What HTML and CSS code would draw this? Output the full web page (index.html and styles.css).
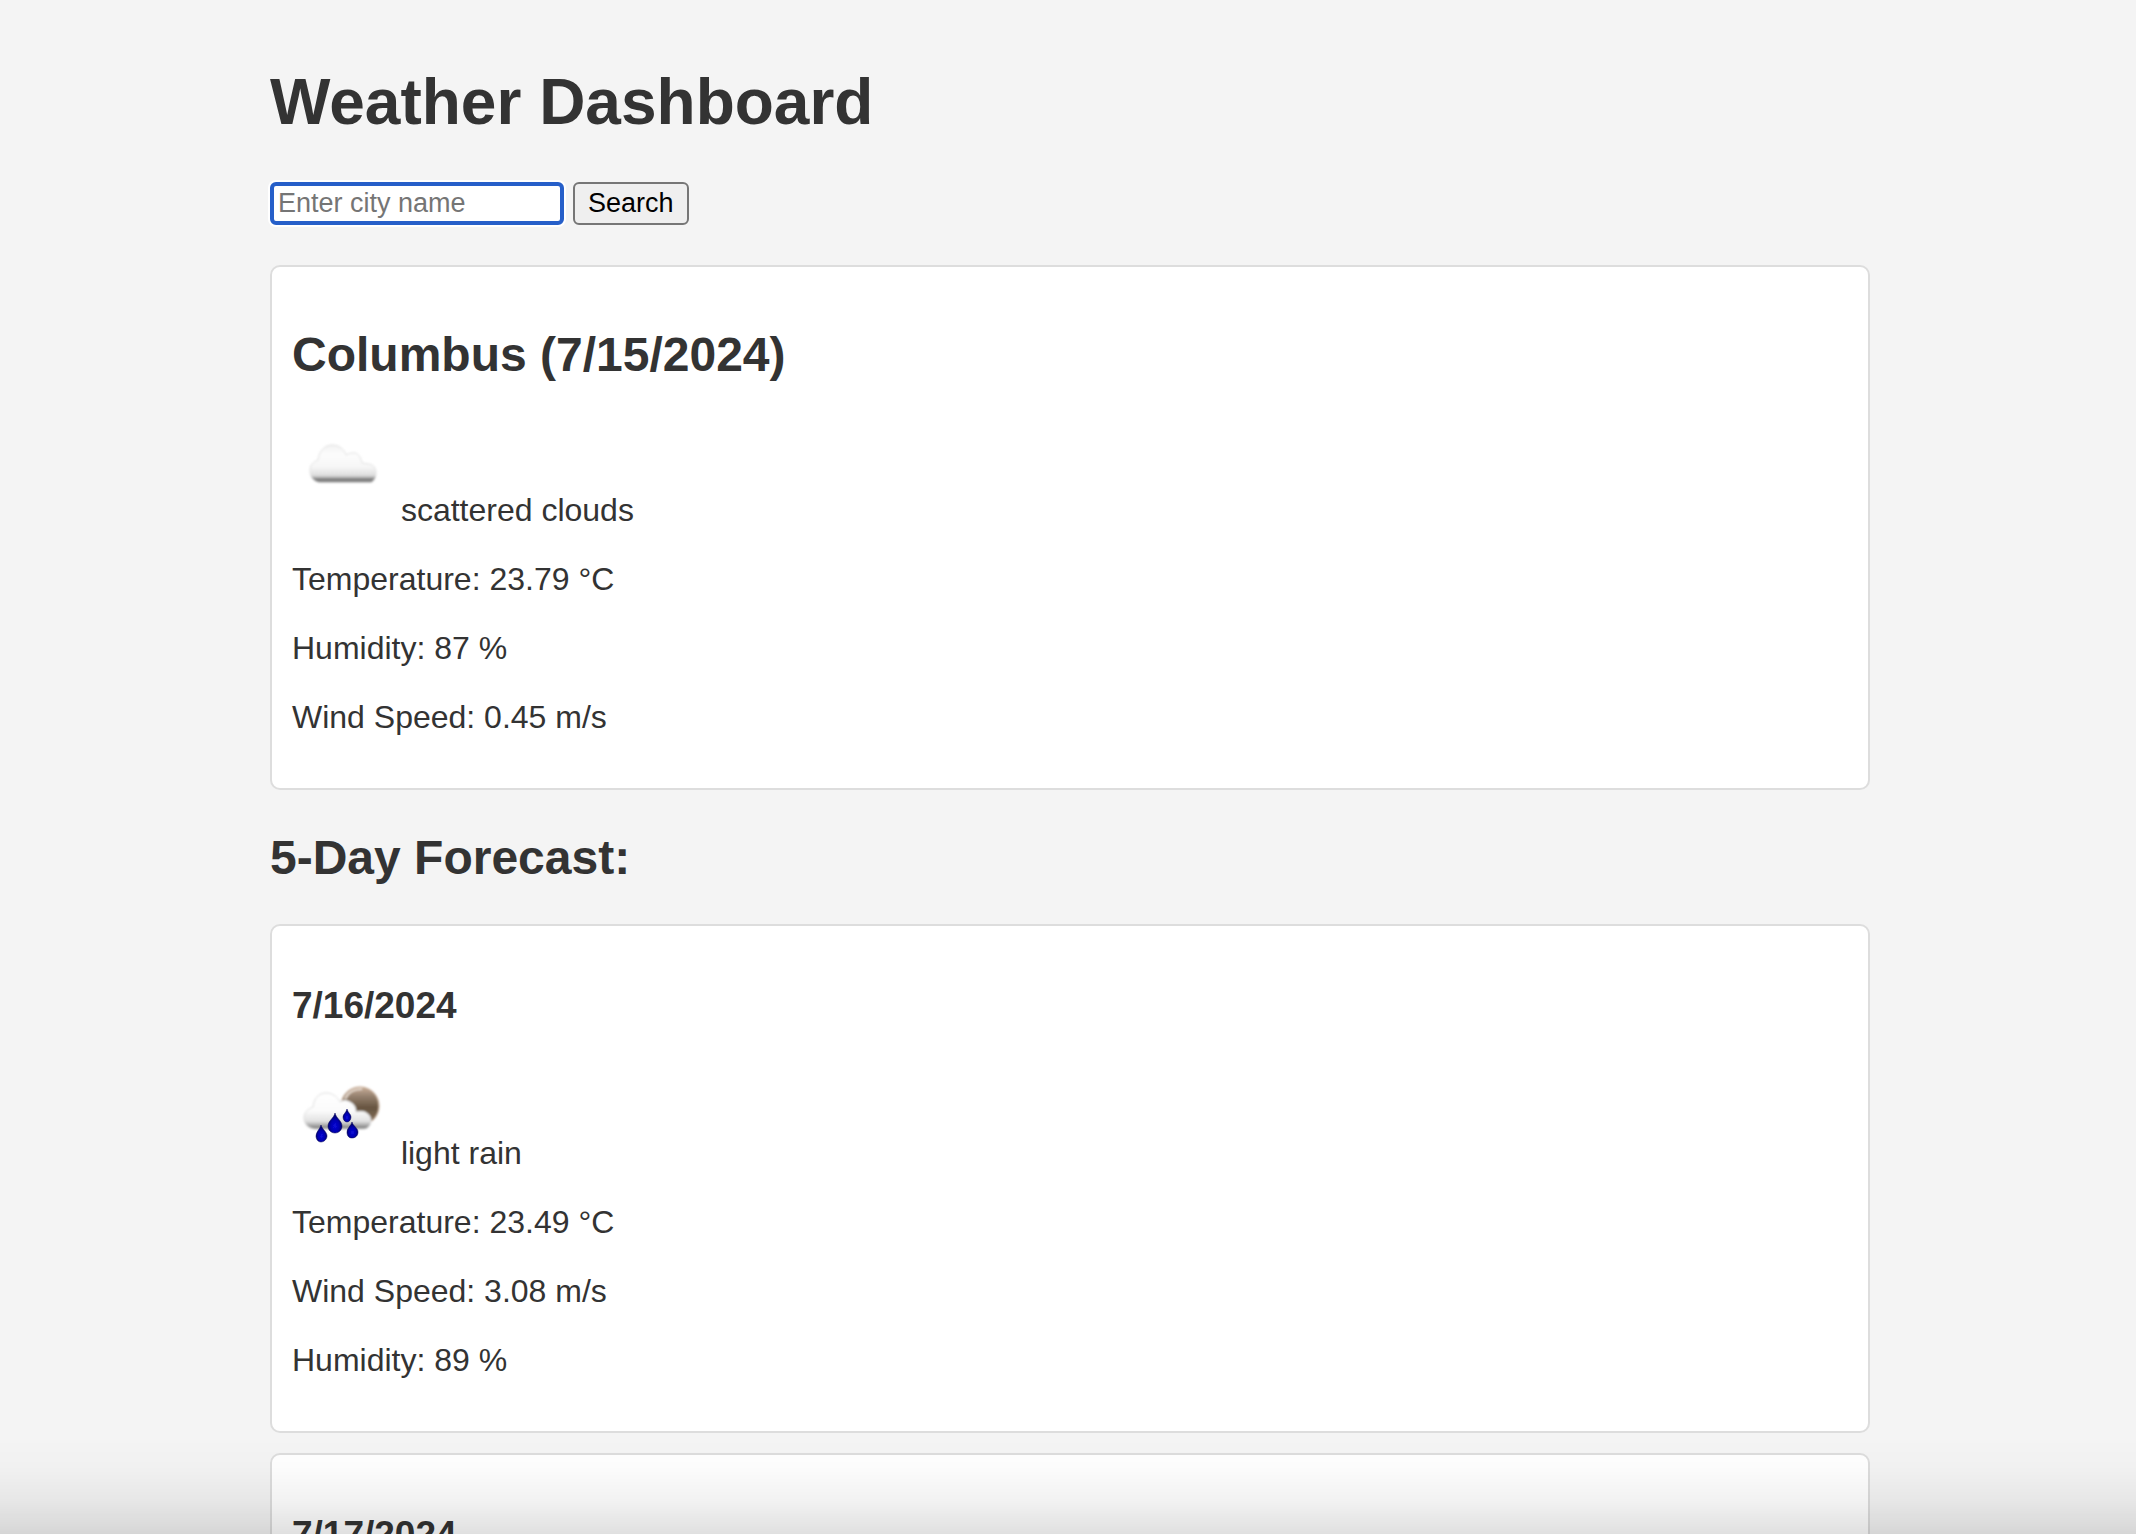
FILE: index.html
```html
<!DOCTYPE html>
<html lang="en">
<head>
<meta charset="utf-8">
<meta name="viewport" content="width=device-width, initial-scale=1">
<title>Weather Dashboard</title>
<link rel="stylesheet" href="styles.css">
</head>
<body>
<div class="page">
  <main class="container">
    <h1 class="title">Weather Dashboard</h1>
    <form class="search">
      <input class="search-input" type="text" aria-label="City name" placeholder="Enter city name">
      <button class="search-button" type="button">Search</button>
    </form>

    <section class="card">
      <h2 class="heading">Columbus (7/15/2024)</h2>
      <p class="condition">
        <svg class="icon" viewBox="0 0 100 100" aria-hidden="true">
          <defs>
            <linearGradient id="cloud" x1="0" y1="0" x2="0" y2="1">
              <stop offset="0" stop-color="#f2f2f2"/>
              <stop offset=".25" stop-color="#fcfcfc"/>
              <stop offset=".6" stop-color="#f6f6f6"/>
              <stop offset=".82" stop-color="#dedede"/>
              <stop offset=".87" stop-color="#b8b8b8"/>
              <stop offset=".92" stop-color="#808080"/>
              <stop offset="1" stop-color="#747474"/>
            </linearGradient>
            <linearGradient id="cloud-edge" x1="0" y1="0" x2="0" y2="1">
              <stop offset="0" stop-color="#e0e0e0"/>
              <stop offset=".8" stop-color="#e0e0e0"/>
              <stop offset="1" stop-color="#a0a0a0"/>
            </linearGradient>
            <filter id="soft"><feGaussianBlur stdDeviation=".8"/></filter>
          </defs>
          <path d="M27 61C21 60 18 55 18 50C18 44 21 41 26 39C27 30 33 24 40 24C47 24 52 28 54 34C57 32 60 32 63 32C67 33 69 37 70 42C72 42 74 43 77 43C82 44 84 47 84 52C84 56 82 60 79 61Z" fill="url(#cloud)" stroke="url(#cloud-edge)" stroke-width="1" filter="url(#soft)"/>
        </svg>
        <span>scattered clouds</span>
      </p>
      <p class="reading">Temperature: 23.79 °C</p>
      <p class="reading">Humidity: 87 %</p>
      <p class="reading">Wind Speed: 0.45 m/s</p>
    </section>

    <h2 class="heading">5-Day Forecast:</h2>

    <div class="forecast">
      <section class="card">
        <h3 class="date">7/16/2024</h3>
        <p class="condition">
          <svg class="icon" viewBox="0 0 100 100" aria-hidden="true">
            <defs>
              <linearGradient id="moon" x1="0" y1="0" x2="0" y2="1">
                <stop offset="0" stop-color="#c9ae98"/>
                <stop offset=".25" stop-color="#94806e"/>
                <stop offset=".55" stop-color="#66543f"/>
                <stop offset="1" stop-color="#8a7560"/>
              </linearGradient>
              <linearGradient id="rain-cloud" x1="0" y1="0" x2="0" y2="1">
                <stop offset="0" stop-color="#ffffff"/>
                <stop offset=".5" stop-color="#fbfbfb"/>
                <stop offset=".78" stop-color="#e2e2e2"/>
                <stop offset=".9" stop-color="#a8a8a8"/>
                <stop offset="1" stop-color="#686868"/>
              </linearGradient>
              <radialGradient id="water" cx=".5" cy=".65" r=".5">
                <stop offset="0" stop-color="#0808d8"/>
                <stop offset=".6" stop-color="#0404b0"/>
                <stop offset="1" stop-color="#000070"/>
              </radialGradient>
              <filter id="smooth"><feGaussianBlur stdDeviation=".5"/></filter>
            </defs>
            <g filter="url(#soft)">
              <circle cx="68" cy="42" r="19" fill="url(#moon)" stroke="#c4a78f" stroke-width="1"/>
              <path d="M53 35C56 28 62 25 70 25" fill="none" stroke="#e6dacf" stroke-width="2"/>
              <path d="M22 65C16 64 12 60 12 54C12 48 16 45 21 43C22 34 27 29 34 29C40 29 45 32 48 38C51 36 55 36 58 38C62 40 64 43 64 48C67 47 70 47 73 48C77 50 79 53 79 57C79 61 76 65 72 65Z" fill="url(#rain-cloud)" stroke="#dedede" stroke-width="1"/>
            </g>
            <g fill="url(#water)" stroke="#000058" stroke-width=".5" filter="url(#smooth)">
              <path d="M43 49C44 54 50 57 50 62C50 66 47 69 43 69C39 69 36 66 36 62C36 57 42 54 43 49Z"/>
              <path d="M55 45C56 49 59 50 59 53C59 56 57 58 55 58C53 58 51 56 51 53C51 50 54 49 55 45Z"/>
              <path d="M29 61C30 65 35 68 35 72C35 75 32 78 29 78C26 78 24 75 24 72C24 68 28 65 29 61Z"/>
              <path d="M60 58C61 62 66 64 66 68C66 72 63 74 60 74C57 74 55 72 55 68C55 64 59 62 60 58Z"/>
            </g>
          </svg>
          <span>light rain</span>
        </p>
        <p class="reading">Temperature: 23.49 °C</p>
        <p class="reading">Wind Speed: 3.08 m/s</p>
        <p class="reading">Humidity: 89 %</p>
      </section>
      <section class="card">
        <h3 class="date">7/17/2024</h3>
      </section>
    </div>
  </main>
</div>
<div class="fade"></div>
</body>
</html>
```
FILE: styles.css
```css
* {
  box-sizing: border-box;
}

body {
  margin: 0;
  background: #f4f4f4;
  color: #333;
  font-family: Arial, "Liberation Sans", sans-serif;
  font-size: 32px;
  line-height: 37px;
}

.page {
  height: 100vh;
  overflow-y: auto;
  scrollbar-width: none;
  padding: 22px 0 20px 4px;
}

.container {
  max-width: 1600px;
  margin: 0 auto;
}

.title {
  margin: 0;
  padding: 43px 0;
  font-size: 64px;
  line-height: 74px;
}

.search {
  display: flex;
  gap: 9px;
  margin-bottom: 40px;
}

.search-input,
.search-button {
  height: 43px;
  border-radius: 6px;
  font-family: inherit;
  font-size: 27px;
  line-height: 31px;
}

.search-input {
  width: 294px;
  padding: 0 4px;
  border: 4px solid #265fc9;
  outline: none;
  background: #fff;
  box-shadow: 0 0 0 2px #fff;
}

.search-input::placeholder {
  color: #757575;
}

.search-button {
  padding: 0 13px;
  border: 2px solid #767676;
  background: #efefef;
  color: #000;
}

.card {
  display: flow-root;
  padding: 20px;
  border: 2px solid #ddd;
  border-radius: 10px;
  background: #fff;
}

.heading {
  margin: 40px 0 39px;
  font-size: 48px;
  line-height: 55px;
}

.date {
  margin: 38px 0 37px;
  font-size: 37px;
  line-height: 43px;
}

.condition,
.reading {
  margin: 32px 0;
}

.icon {
  width: 100px;
  height: 100px;
}

.forecast {
  display: grid;
  gap: 20px;
}

.fade {
  position: fixed;
  inset: auto 0 0;
  height: 96px;
  background: linear-gradient(rgba(0, 0, 0, 0), rgba(0, 0, 0, 0.01) 30%, rgba(0, 0, 0, 0.05) 65%, rgba(0, 0, 0, 0.12));
  pointer-events: none;
}
```
